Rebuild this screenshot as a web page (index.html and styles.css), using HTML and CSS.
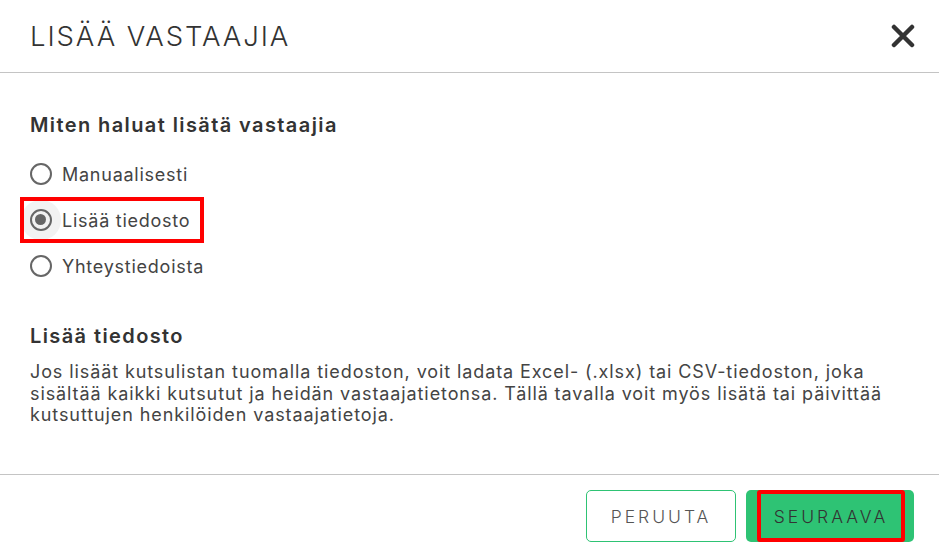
FILE: index.html
```html
<!DOCTYPE html>
<html lang="fi">

<head>
    <meta charset="UTF-8">
    <meta name="viewport" content="width=device-width, initial-scale=1.0">
    <title>Lisää vastaajia</title>
    <link rel="stylesheet" href="styles.css">
</head>

<body>
    <div class="modal">
        <header class="modal-header">
            <h1>LISÄÄ VASTAAJIA</h1>
            <button class="close-btn" aria-label="Sulje">
                <svg width="24" height="24" viewBox="0 0 24 24">
                    <path d="M3 3 L21 21 M21 3 L3 21" stroke="#333" stroke-width="4.5" stroke-linecap="round" />
                </svg>
            </button>
        </header>

        <div class="modal-body">
            <h2>Miten haluat lisätä vastaajia</h2>
            <div class="options">
                <label class="option">
                    <span class="radio"></span>
                    <span>Manuaalisesti</span>
                </label>
                <label class="option selected highlight">
                    <span class="radio"></span>
                    <span>Lisää tiedosto</span>
                </label>
                <label class="option">
                    <span class="radio"></span>
                    <span>Yhteystiedoista</span>
                </label>
            </div>

            <h2 class="info-title">Lisää tiedosto</h2>
            <p class="info-text">Jos lisäät kutsulistan tuomalla tiedoston, voit ladata Excel- (.xlsx) tai CSV-tiedoston, joka sisältää kaikki kutsutut ja heidän vastaajatietonsa. Tällä tavalla voit myös lisätä tai päivittää kutsuttujen henkilöiden vastaajatietoja.</p>
        </div>

        <footer class="modal-footer">
            <button class="btn btn-outline">PERUUTA</button>
            <button class="btn btn-primary"><span class="highlight-box">SEURAAVA</span></button>
        </footer>
    </div>
</body>

</html>
```

FILE: styles.css
```css
body {
    margin: 0;
    font-family: Inter, "Open Sans", sans-serif;
    color: #333;
    background: #fff;
}

.modal {
    width: 939px;
    height: 557px;
    display: flex;
    flex-direction: column;
}

.modal-header {
    height: 73px;
    border-bottom: 1px solid #c4c4c4;
    display: flex;
    align-items: center;
    justify-content: space-between;
    padding: 0 24px 0 30px;
    box-sizing: border-box;
}

.modal-header h1 {
    margin: 0;
    font-size: 27.5px;
    font-weight: 300;
    letter-spacing: 1.9px;
    color: #333;
}

.close-btn {
    border: none;
    background: none;
    padding: 0;
    display: flex;
}

.modal-body {
    flex: 1;
    padding: 40px 30px 0;
}

.modal-body h2 {
    margin: 0;
    font-size: 20px;
    font-weight: 600;
    letter-spacing: 1.4px;
    color: #333;
}

.options {
    display: flex;
    flex-direction: column;
    align-items: flex-start;
    gap: 20px;
    margin-top: 24px;
}

.option {
    display: inline-flex;
    align-items: center;
    gap: 10px;
    height: 26px;
    padding-right: 4px;
    font-size: 18px;
    letter-spacing: 0.75px;
    color: #444;
}

.radio {
    position: relative;
    width: 22px;
    height: 22px;
    box-sizing: border-box;
    border: 2.5px solid #666;
    border-radius: 50%;
}

.option.selected .radio::before {
    content: "";
    position: absolute;
    left: -11px;
    top: -11px;
    width: 40px;
    height: 40px;
    border-radius: 50%;
    background: #f2f2f2;
    z-index: -1;
}

.option.selected .radio::after {
    content: "";
    position: absolute;
    left: 3px;
    top: 3px;
    width: 11px;
    height: 11px;
    border-radius: 50%;
    background: #666;
}

.highlight {
    outline: 4px solid #f00;
    outline-offset: 6px;
}

.info-title {
    margin-top: 45px !important;
}

.info-text {
    margin: 13px 0 0;
    font-size: 18px;
    line-height: 21.5px;
    letter-spacing: 0.9px;
    color: #444;
}

.modal-footer {
    border-top: 1px solid #c4c4c4;
    display: flex;
    justify-content: flex-end;
    gap: 10px;
    padding: 15px 25px 15px 0;
}

.btn {
    height: 52px;
    font-family: inherit;
    font-size: 17.5px;
    font-weight: 300;
    letter-spacing: 3px;
    border-radius: 5px;
    cursor: pointer;
}

.btn-outline {
    width: 150px;
    background: #fff;
    border: 1px solid #2ec374;
    color: #555;
}

.btn-primary {
    width: 168px;
    padding: 0 9px 0 11px;
    background: #2ec374;
    border: none;
    color: #333;
}

.highlight-box {
    display: flex;
    align-items: center;
    justify-content: center;
    height: 100%;
    box-sizing: border-box;
    border: 4px solid #f00;
    border-radius: 3px;
}
```
